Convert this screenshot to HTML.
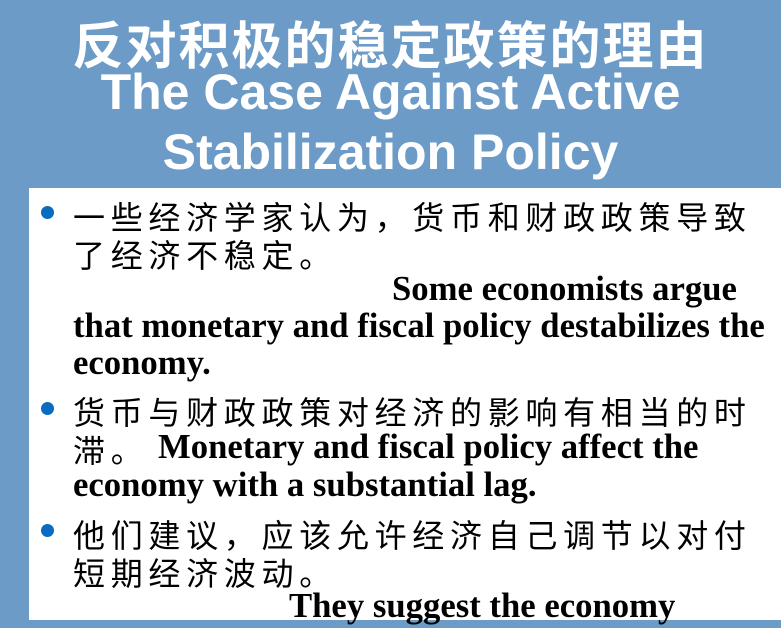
<!DOCTYPE html>
<html><head><meta charset="utf-8"><style>
body{margin:0;width:781px;height:628px;background:#6b9bc6;position:relative;overflow:hidden}
.t{position:absolute;left:0;width:781px;text-align:center;color:#fff;font-weight:bold;white-space:nowrap}
.zh{font-family:"Liberation Sans","Noto Sans CJK SC",sans-serif}
.box{position:absolute;left:29px;top:188px;width:752px;height:432px;background:#fff}
.l{position:absolute;white-space:nowrap;color:#000}
.c{font-family:"Liberation Sans","Noto Sans CJK SC",sans-serif;font-size:32px;letter-spacing:5.7px;left:73px}
.e{font-family:"Liberation Serif",serif;font-weight:bold;font-size:34.7px}
.b{position:absolute;left:41px;width:13px;height:13px;border-radius:50%;background:#0a6cc0}
</style></head><body>
<div class="t zh" style="top:5px;font-size:51px;letter-spacing:2px">反对积极的稳定政策的理由</div>
<div class="t" style="top:63px;font-size:50px;font-family:'Liberation Sans',sans-serif">The Case Against Active</div>
<div class="t" style="top:123px;font-size:50px;font-family:'Liberation Sans',sans-serif">Stabilization Policy</div>
<div class="box"></div>
<div class="b" style="top:206px"></div>
<div class="l c" style="top:193px">一些经济学家认为，货币和财政政策导致</div>
<div class="l c" style="top:231px">了经济不稳定。</div>
<div class="l e" style="top:269px;left:392px">Some economists argue</div>
<div class="l e" style="top:306px;left:73px">that monetary and fiscal policy destabilizes the</div>
<div class="l e" style="top:343px;left:73px">economy.</div>
<div class="b" style="top:402px"></div>
<div class="l c" style="top:388px">货币与财政政策对经济的影响有相当的时</div>
<div class="l c" style="top:426px">滞。</div>
<div class="l e" style="top:427px;left:158px">Monetary and fiscal policy affect the</div>
<div class="l e" style="top:465px;left:73px">economy with a substantial lag.</div>
<div class="b" style="top:524px"></div>
<div class="l c" style="top:511px">他们建议，应该允许经济自己调节以对付</div>
<div class="l c" style="top:549px">短期经济波动。</div>
<div class="l e" style="top:586px;left:289px">They suggest the economy</div>
</body></html>
